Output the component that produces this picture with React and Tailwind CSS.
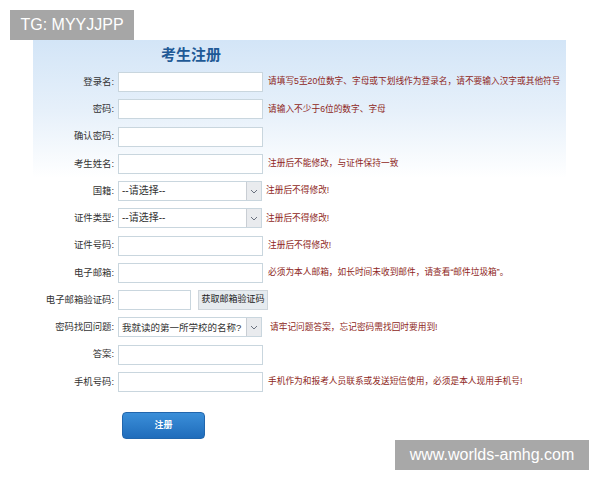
import React from "react";

const font = { fontFamily: '"Liberation Sans", "Noto Sans CJK SC", sans-serif' };

function Chevron() {
  return (
    <svg width="8" height="5" viewBox="0 0 8 5" fill="none">
      <path d="M1 1l3 3 3-3" stroke="#6b7280" strokeWidth="1" />
    </svg>
  );
}

function Select({ text, textSize = "text-[10px]" }) {
  return (
    <div className="shrink-0 w-[144px] h-[20px] border border-[#c9d6de] bg-white flex items-center justify-between pl-[3px]">
      <span className={`${textSize} text-[#333] leading-none whitespace-nowrap`}>{text}</span>
      <span className="shrink-0 w-[15px] h-[18px] bg-[#e9ebee] border-l border-[#c9ced4] flex items-center justify-center">
        <Chevron />
      </span>
    </div>
  );
}

function Input({ width = "w-[145px]" }) {
  return <div className={`shrink-0 ${width} h-[20px] border border-[#c9d6de] bg-white`} />;
}

function Row({ label, children, hint, hintMl = "ml-[5px]" }) {
  return (
    <div className="h-[27.25px] flex items-center">
      <div className="shrink-0 w-[85px] text-right text-[9.4px] text-[#333] pr-[4px] whitespace-nowrap">{label}</div>
      {children}
      {hint && <div className={`${hintMl} text-[8.7px] text-[#8e1f22] whitespace-nowrap`}>{hint}</div>}
    </div>
  );
}

export default function App() {
  return (
    <div className="relative w-[600px] h-[480px] bg-white overflow-hidden" style={font}>
      <div className="ml-[33px] pt-[40px]">
        <div className="w-[533px] h-[420px] bg-[linear-gradient(to_bottom,#d3e5f7_0px,#e6f0fa_70px,#ffffff_138px)]">
          <div className="h-[28.4px] pt-[6px] pl-[128px] text-[15px] font-bold text-[#1f5a96] leading-[18px]">
            考生注册
          </div>
          <Row label="登录名:" hint="请填写5至20位数字、字母或下划线作为登录名，请不要输入汉字或其他符号">
            <Input />
          </Row>
          <Row label="密码:" hint="请输入不少于6位的数字、字母">
            <Input />
          </Row>
          <Row label="确认密码:">
            <Input />
          </Row>
          <Row label="考生姓名:" hint="注册后不能修改，与证件保持一致">
            <Input />
          </Row>
          <Row label="国籍:" hint="注册后不得修改!" hintMl="ml-[4px]">
            <Select text="--请选择--" />
          </Row>
          <Row label="证件类型:" hint="注册后不得修改!" hintMl="ml-[4px]">
            <Select text="--请选择--" />
          </Row>
          <Row label="证件号码:" hint="注册后不得修改!">
            <Input />
          </Row>
          <Row label="电子邮箱:" hint="必须为本人邮箱，如长时间未收到邮件，请查看“邮件垃圾箱”。">
            <Input />
          </Row>
          <Row label="电子邮箱验证码:">
            <Input width="w-[73px]" />
            <div className="shrink-0 ml-[7px] w-[70px] h-[20px] bg-[#e6ebef] border border-[#cfd6dc] flex items-center justify-center text-[9px] text-[#222] whitespace-nowrap">
              获取邮箱验证码
            </div>
          </Row>
          <Row label="密码找回问题:" hint="请牢记问题答案，忘记密码需找回时要用到!" hintMl="ml-[8px]">
            <Select text="我就读的第一所学校的名称?" textSize="text-[9.5px]" />
          </Row>
          <Row label="答案:">
            <Input />
          </Row>
          <Row label="手机号码:" hint="手机作为和报考人员联系或发送短信使用，必须是本人现用手机号!">
            <Input />
          </Row>
          <div className="mt-[17px] ml-[89px] w-[83px] h-[27px] rounded-[4px] bg-[linear-gradient(to_bottom,#3b8fd9,#1f6cbb)] border border-[#2166ad] flex items-center justify-center text-white text-[9px] font-bold">
            注册
          </div>
        </div>
      </div>

      <div className="absolute left-[10px] top-[10px] w-[124px] h-[30px] bg-[#a6a6a6] text-white text-[16px] flex items-center justify-center">
        TG: MYYJJPP
      </div>
      <div className="absolute left-[395px] top-[440px] w-[194px] h-[30px] bg-[#a8a8a8] text-white text-[16px] flex items-center justify-center">
        www.worlds-amhg.com
      </div>
    </div>
  );
}
